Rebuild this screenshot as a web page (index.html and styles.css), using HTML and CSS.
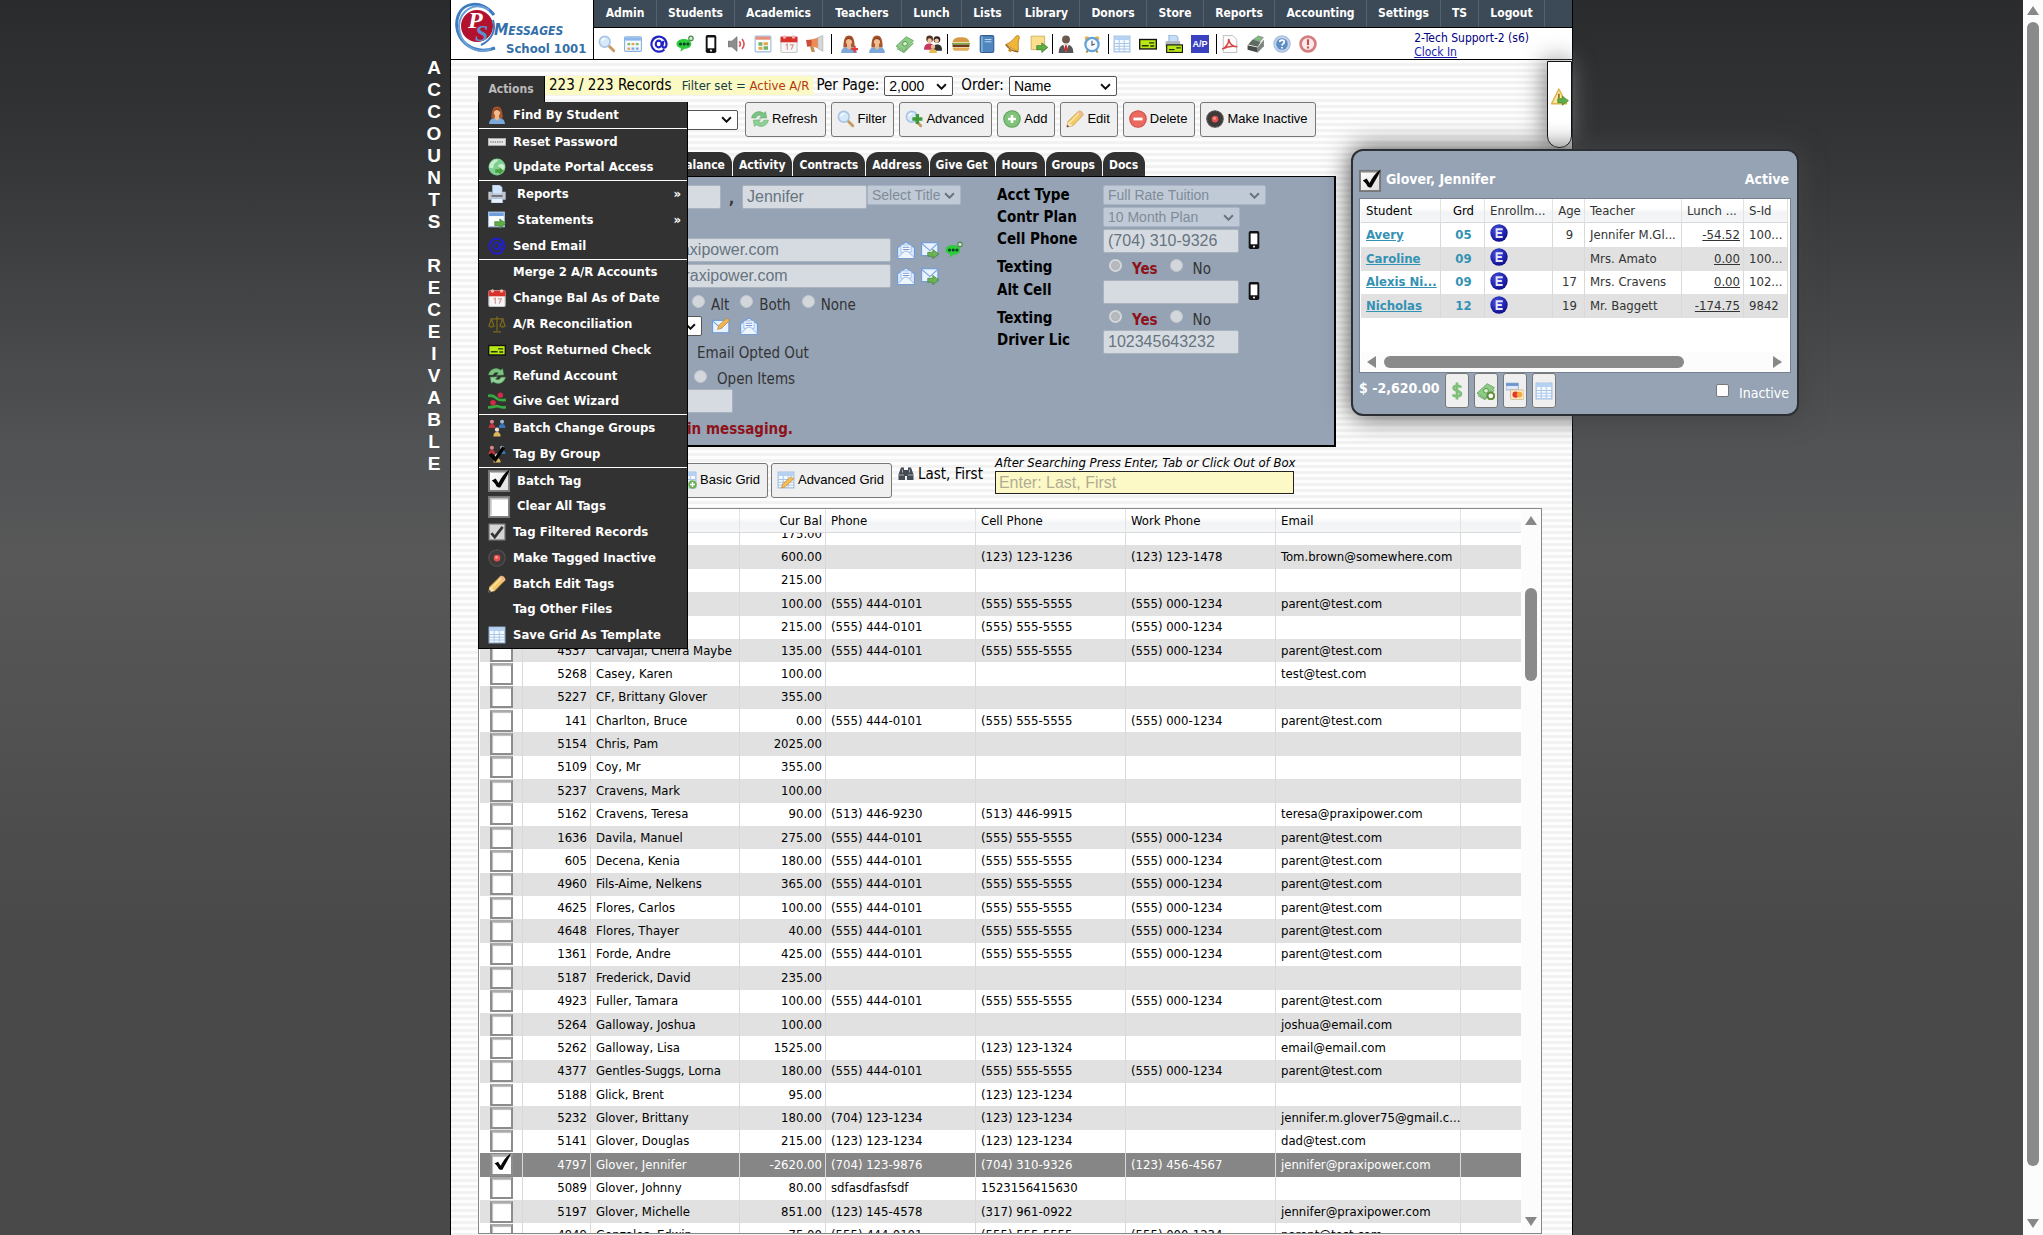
FILE: index.html
```html
<!DOCTYPE html>
<html lang="en">
<head>
<meta charset="utf-8">
<title>Accounts Receivable</title>
<link rel="stylesheet" href="styles.css">
</head>
<body>
<svg class="defs" aria-hidden="true">
  <defs>
    <linearGradient id="g-check" x1="0" y1="0" x2="1" y2="1"><stop offset="0" stop-color="#fff"/><stop offset="1" stop-color="#ddd"/></linearGradient>
    <radialGradient id="g-ball" cx=".4" cy=".35" r=".7"><stop offset="0" stop-color="#4a55e8"/><stop offset="1" stop-color="#0a0a86"/></radialGradient>
  </defs>
  <symbol id="lens" viewBox="0 0 16 16"><path d="M9.500 9.500l4.500 4.500" stroke="#c79a63" stroke-width="2.600" stroke-linecap="round"/><circle cx="6" cy="6" r="4.800" fill="#d5e9fb" stroke="#a9c4e4" stroke-width="1.400"/><path d="M3.500 5.500a3 3 0 0 1 3-2.300" stroke="#fff" fill="none" stroke-width="1.200"/></symbol>
  <symbol id="month" viewBox="0 0 16 16"><rect x=".5" y="1.500" width="15" height="13" rx="1" fill="#f4f9ff" stroke="#8db2dc"/><path d="M1 2h14v3H1z" fill="#8bb8ea"/><path d="M3 7h2.500v2H3zM10.500 7H13v2h-2.500z" fill="#7bbf6a"/><path d="M6.700 7h2.500v2H6.700zM3 11h2.500v2H3z" fill="#e9a04c"/><path d="M6.700 11h2.500v2H6.700zM10.500 11H13v2h-2.500z" fill="#7aa6de"/></symbol>
  <symbol id="at" viewBox="0 0 16 16"><path d="M12.800 12.800A6.700 6.700 0 1 1 14.700 8c0 2-.9 3.200-2.200 3.200-1.200 0-1.600-.9-1.300-2.200l.7-3.800" fill="none" stroke="#2222c4" stroke-width="1.900"/><ellipse cx="7.700" cy="8" rx="2.600" ry="3" fill="none" stroke="#2222c4" stroke-width="1.800"/></symbol>
  <symbol id="chat" viewBox="0 0 16 16"><path d="M7 3.500c4 0 6.600 2 6.600 4.500S11 12.300 7.500 12.300L4 14.800l.4-3C1.800 11 .4 9.800.4 8 .4 5.500 3 3.500 7 3.500z" fill="#2fca3e"/><circle cx="4" cy="8" r="1.400" fill="#042"/><circle cx="7.300" cy="8" r="1.400" fill="#042"/><circle cx="10.600" cy="8" r="1.400" fill="#042"/><circle cx="13.300" cy="3" r="2" fill="#cfe8cf" stroke="#4c8a50"/></symbol>
  <symbol id="phone" viewBox="0 0 16 16"><rect x="3.300" y="0" width="9.400" height="16" rx="1.600" fill="#111"/><path d="M5 2.200h6v9.600H5z" fill="#fff"/><circle cx="8" cy="13.800" r="1" fill="#ddd"/></symbol>
  <symbol id="sound" viewBox="0 0 16 16"><path d="M0 5.500h3.500L8 1.500v13l-4.500-4H0z" fill="#8d8d8d" stroke="#666" stroke-width=".6"/><path d="M10 5.500q2 2.500 0 5M12.500 3.500q3.500 4.500 0 9" fill="none" stroke="#e2565a" stroke-width="1.500"/></symbol>
  <symbol id="agenda" viewBox="0 0 16 16"><rect x="1" y="1" width="14" height="14" rx="1" fill="#fbfdff" stroke="#9cb9dd"/><path d="M1.500 1.500h13v2.700h-13z" fill="#e98e78"/><path d="M4 6.500h3.500v3H4zM8.500 10h4v3h-4z" fill="#6fb36a"/><path d="M8.500 6.500h4v2.500h-4zM4 10.500h3.500V13H4z" fill="#e7a54f"/></symbol>
  <symbol id="date" viewBox="0 0 16 16"><rect x=".8" y="1.500" width="14.400" height="14" rx="1" fill="#f6f6f6" stroke="#c8c8c8"/><path d="M.5 1.500h15v5H.5z" fill="#d8322c"/><circle cx="4" cy="1.800" r="1.500" fill="#f3b3ac"/><circle cx="12" cy="1.800" r="1.500" fill="#f3b3ac"/><path d="M5 9l1.500-.8V13M8.800 8.700h3L10 13" fill="none" stroke="#d49a9a" stroke-width="1.100"/></symbol>
  <symbol id="horn" viewBox="0 0 16 16"><path d="M0 4.500l6-.5v6l-5 .5z" fill="#c95038"/><path d="M5 4l8-2.500v11L5 10z" fill="#ef8a55"/><path d="M10.500 2.300L15 .5v14l-4.500-2.500z" fill="#d6d6d6" stroke="#a5a5a5" stroke-width=".5"/><path d="M3.500 10h3l1.500 5H5z" fill="#c48b54"/></symbol>
  <symbol id="woman" viewBox="0 0 16 16"><path d="M3 11C3 3 5 .5 8 .5S13 3 13 11z" fill="#a9562c"/><path d="M1 16c0-4 2.500-5.300 7-5.300S15 12 15 16z" fill="#7ba7d9"/><path d="M6.300 8h3.400l.3 3.500L8 13l-2-1.500z" fill="#eab98d"/><circle cx="8" cy="6" r="2.700" fill="#eebf94"/><path d="M5 5.500C6 3 9 3 11 5.500 11 2.500 9.500 2 8 2S5 3 5 5.500z" fill="#8b4220"/></symbol>
  <symbol id="womanadd" viewBox="0 0 16 16"><use href="#woman"/><path d="M10 12.500h6M13 9.500v6" stroke="#e23b3b" stroke-width="1.900"/></symbol>
  <symbol id="cash" viewBox="0 0 16 16"><path d="M0 10l9-8.500L15.500 5 7 14.500z" fill="#8dcb86" stroke="#5a9e55" stroke-width=".7"/><path d="M1 12l6 3.500L15.500 7" fill="none" stroke="#69ad62"/><circle cx="8" cy="7.800" r="2.100" fill="#d6f0cf" stroke="#4f9149" stroke-width=".8"/></symbol>
  <symbol id="family" viewBox="0 0 16 16"><circle cx="5" cy="3.500" r="3" fill="#503020"/><circle cx="11.500" cy="4" r="3" fill="#2b211c"/><circle cx="5" cy="4.800" r="2" fill="#f0c39b"/><circle cx="11.300" cy="5.200" r="2" fill="#f0c39b"/><path d="M0 13c0-4 2-5.500 5-5.500s4 2 4 5.500z" fill="#c7375b"/><path d="M8 14c0-4 1-5.500 4-5.500s4 2 4 5.500z" fill="#333"/><circle cx="8" cy="10.500" r="2" fill="#eab98d"/><path d="M4.500 16c0-2.500 1.500-3.500 3.500-3.500s3.500 1 3.500 3.500z" fill="#e3bb4f"/></symbol>
  <symbol id="burger" viewBox="0 0 16 16"><path d="M.5 6.500C1 3 4 2 8 2s7 1 7.500 4.500z" fill="#d79a45"/><path d="M0 7h16v1.500H0z" fill="#7cad3f"/><path d="M.5 8.500h15v2.200H.5z" fill="#6e3c1c"/><path d="M.5 11h15c0 2-1 3-3 3h-9c-2 0-3-1-3-3z" fill="#e0ac5a"/></symbol>
  <symbol id="book" viewBox="0 0 16 16"><rect x="2" y=".5" width="12" height="15" rx="1.300" fill="#4f86bd" stroke="#2f5f92"/><path d="M3.500 1v14" stroke="#9cc3e6"/><path d="M6 4h6M6 6h6" stroke="#b8d6f0"/></symbol>
  <symbol id="bell" viewBox="0 0 16 16"><path d="M1.500 8.500C6 7 8 4 11 .8c1-.7 3 0 2.600 1.600C12 7 13 10 12.500 15z" fill="#f0b63a" stroke="#b97f1b" stroke-width=".8"/><path d="M1.500 8.500q4 5.500 11 6.500" fill="none" stroke="#8f5d12"/><circle cx="5.500" cy="13.500" r="1.600" fill="#c98e22"/></symbol>
  <symbol id="notego" viewBox="0 0 16 16"><path d="M1 1h12v10l-3 2H1z" fill="#fae08e" stroke="#cfae57" stroke-width=".8"/><path d="M6 9.500h4.500V7l5.300 4-5.300 4.500V13H6z" fill="#5fae46" stroke="#3b7f2b" stroke-width=".7"/></symbol>
  <symbol id="man" viewBox="0 0 16 16"><circle cx="8" cy="4" r="3.500" fill="#6b5a50"/><path d="M1.500 16c0-5.500 2.500-7.500 6.500-7.500s6.500 2 6.500 7.500z" fill="#555"/><path d="M5.500 8.500h5L8 15z" fill="#fff"/><path d="M7.200 9h1.600l.7 4L8 15l-1.500-2z" fill="#d7282f"/></symbol>
  <symbol id="clock" viewBox="0 0 16 16"><circle cx="3.500" cy="3" r="2" fill="#e8b04a"/><circle cx="12.500" cy="3" r="2" fill="#e8b04a"/><path d="M3 15.500l2-3M13 15.500l-2-3" stroke="#a77b36" stroke-width="1.500"/><circle cx="8" cy="8.500" r="5.900" fill="#f4fafe" stroke="#62a2d8" stroke-width="2"/><path d="M8 5v4l2.500-1" fill="none" stroke="#555"/></symbol>
  <symbol id="table" viewBox="0 0 16 16"><rect x="1" y="1" width="14" height="14" fill="#f7fbff" stroke="#9bbbe0"/><path d="M1.500 1.500h13v3h-13z" fill="#b6d2f3"/><path d="M1 7.500h14M1 10h14M1 12.500h14M5.500 4v11M10 4v11" stroke="#a9c6e8" stroke-width=".9"/></symbol>
  <symbol id="check" viewBox="0 0 16 16"><rect x=".6" y="4" width="14.800" height="8.400" fill="#b9e814" stroke="#111" stroke-width="1.200"/><path d="M2.500 9.500h6M10 9.800h3.500M9 7h4.500" stroke="#27330a" stroke-width="1.300"/></symbol>
  <symbol id="printcheck" viewBox="0 0 16 16"><path d="M3.500 0h6l2 2v5h-8z" fill="#c6defa" stroke="#7a9cc6" stroke-width=".7"/><path d="M.5 5.500h13V11H.5z" fill="#b0b4bb"/><rect x="1.500" y="8.800" width="14" height="6.700" fill="#b9e814" stroke="#111"/><path d="M3.500 13h5M10 11.500h4" stroke="#27330a" stroke-width="1.200"/></symbol>
  <symbol id="pdf" viewBox="0 0 16 16"><path d="M2 .5h8.500L14 4v11.500H2z" fill="#fdfdfd" stroke="#b9b9b9" stroke-width=".8"/><path d="M1 12.500C6 10 7 6 6.800 3.500 7.500 8 10 10.500 14.500 10.500 10 9.500 5 10.500 1 12.500z" fill="none" stroke="#d84646" stroke-width="1.300"/></symbol>
  <symbol id="register" viewBox="0 0 16 16"><path d="M5 4l5-3.500 5 1.500-4 5z" fill="#8fa18f"/><path d="M1 8.500L5 4l7 2.500-2.500 4z" fill="#5d6b61"/><path d="M.5 9l9 2v4.500l-9-2.500z" fill="#474d49"/><path d="M9.500 11L15 4v6l-5.500 5.500z" fill="#7a857d"/><path d="M8 2.500l4 1" stroke="#6fd06a" stroke-width="1.500"/></symbol>
  <symbol id="help" viewBox="0 0 16 16"><circle cx="8" cy="8" r="7.200" fill="#c3d5eb" stroke="#a3bbdb"/><circle cx="8" cy="8" r="5.200" fill="#5f8ec4"/><path d="M6 6.300C6 4 10 4 10 6.300 10 7.800 8 7.700 8 9.300M8 10.600v1.300" fill="none" stroke="#fff" stroke-width="1.500"/></symbol>
  <symbol id="alert" viewBox="0 0 16 16"><circle cx="8" cy="8" r="6.600" fill="#fbeaea" stroke="#d47e80" stroke-width="2.400"/><path d="M8 3.800v5M8 10.200v1.900" stroke="#c94f52" stroke-width="1.900"/></symbol>
  <symbol id="warngo" viewBox="0 0 16 16"><path d="M7 1L14 14H.5z" fill="#fbe6a0" stroke="#dfb64f" stroke-linejoin="round" stroke-width="1.300"/><path d="M7 5v4" stroke="#8a6414" stroke-width="1.400"/><path d="M6 9.500h4V7.300l5.500 4-5.500 4V13H6z" fill="#5fae46" stroke="#3b7f2b" stroke-width=".6"/></symbol>
  <symbol id="key" viewBox="0 0 16 16"><rect x=".3" y="5" width="15.400" height="6" fill="#e7e7e7" stroke="#bdbdbd" stroke-width=".6"/><path d="M2 8h12" stroke="#8a8a8a" stroke-width="1.400" stroke-dasharray="1.200 .8"/></symbol>
  <symbol id="globe" viewBox="0 0 16 16"><circle cx="8" cy="8" r="7.500" fill="#7fcf93"/><path d="M2 5c2-3.500 5-4 7-3.500C8 4 5 4 5 7S3 9 1 8.500zM9 6l4-1 2 2.500-2 4.500-3-2z" fill="#c9efcc"/><path d="M6.500 10h3.500V8l4 3.300-4 3.500V13H6.500z" fill="#4c9f3c"/></symbol>
  <symbol id="printer" viewBox="0 0 16 16"><path d="M4 0h6l2.500 2v6H4z" fill="#cfe3fa" stroke="#9dbce0" stroke-width=".6"/><path d="M.3 6h3.200v2h9V6h3.200v7H.3z" fill="#c3c6cc"/><path d="M3 9h10v1.500H3z" fill="#666b74"/><path d="M3 12h10v4H3z" fill="#e7f1fc" stroke="#9dbce0" stroke-width=".6"/></symbol>
  <symbol id="formgo" viewBox="0 0 16 16"><rect x=".5" y="1" width="14" height="13" fill="#fdfeff" stroke="#a2bfe4"/><path d="M1 1.500h13v3H1z" fill="#6e9fdc"/><path d="M6 9.500h4.500V7l5.300 4-5.300 4.500V13H6z" fill="#5fae46" stroke="#3b7f2b" stroke-width=".6"/></symbol>
  <symbol id="scales" viewBox="0 0 16 16"><path d="M8 1v13M2 3.500h12M4.500 15h7M3 3.500L.8 10h4.600L3 3.500M13 3.500L10.600 10h4.600L13 3.500" fill="none" stroke="#7c6a1c" stroke-width="1.100"/><path d="M.3 10h5.400q-2.700 3-5.400 0zM10.300 10h5.400q-2.700 3-5.400 0z" fill="#6b5b15"/></symbol>
  <symbol id="refresh" viewBox="0 0 16 16"><path d="M.5 7C1.500 1.500 8 0 11 2.800l2-1.300 1 5.500-6.500.3 1.800-2C8 4.300 5.500 4.500 4.500 7z" fill="#7cc383" stroke="#4c9a55" stroke-width=".4"/><path d="M15.500 9C14.500 14.500 8 16 5 13.200l-2 1.300L2 9l6.500-.3-1.800 2c1.300 1 3.800.8 4.800-1.700z" fill="#8ed095" stroke="#4c9a55" stroke-width=".4"/></symbol>
  <symbol id="give" viewBox="0 0 16 16"><path d="M0 3.500c5-1 6 1 8 2.500s5 1.500 8 1" fill="none" stroke="#38a83f" stroke-width="2.400"/><path d="M16 13.500c-5 1-6-1-8-1s-5 1.500-8 1" fill="none" stroke="#38a83f" stroke-width="2.400"/><circle cx="11" cy="2.800" r="2.400" fill="#cf2d47"/><circle cx="4.500" cy="9.600" r="2.400" fill="#cf2d47"/></symbol>
  <symbol id="groups" viewBox="0 0 16 16"><circle cx="3.500" cy="2.500" r="1.800" fill="#d88"/><path d="M.5 8q0-3.500 3-3.500t3 3.500z" fill="#b8333c"/><circle cx="12.500" cy="2.500" r="1.800" fill="#9bd"/><path d="M9.500 8q0-3.500 3-3.500t3 3.500z" fill="#3676ba"/><circle cx="8" cy="9.500" r="1.900" fill="#edc"/><path d="M4.800 15.500q0-4 3.200-4t3.200 4z" fill="#dcb65c"/></symbol>
  <symbol id="grouptag" viewBox="0 0 16 16"><use href="#groups"/><path d="M2 8l4.500 5L14 2" fill="none" stroke="#050505" stroke-width="3"/></symbol>
  <symbol id="ticked" viewBox="0 0 24 24"><rect x="1" y="2" width="21" height="21" fill="url(#g-check)" stroke="#777" stroke-width="2"/><path d="M2.500 3.500h18" stroke="#aaa"/><path d="M4 12l4-2 3 4.500C14 9 17 4 22.500.5c-1 4.500-5.500 11.500-9.500 18.500-1.500.5-3 0-4-.8C7.500 15.500 6 13.500 4 12z" fill="#060606"/></symbol>
  <symbol id="unticked" viewBox="0 0 24 24"><rect x="1" y="2" width="21" height="21" fill="#fff" stroke="#777" stroke-width="2"/><path d="M3 21V4h18" fill="none" stroke="#bbb" stroke-width="1.500"/></symbol>
  <symbol id="greytick" viewBox="0 0 16 16"><rect x="1" y="1" width="14" height="14" fill="#d5d5d5" stroke="#888"/><path d="M3 9l3 3.500L13 3.500" fill="none" stroke="#333" stroke-width="2.400"/></symbol>
  <symbol id="record" viewBox="0 0 16 16"><circle cx="8" cy="8" r="7.300" fill="#3e3a3a" stroke="#565151"/><circle cx="8" cy="8" r="3" fill="#e4504e"/><circle cx="7.600" cy="7.500" r="1.200" fill="#ff9a90"/></symbol>
  <symbol id="pencil" viewBox="0 0 16 16"><path d="M.8 15.200l.7-4.700L11 1.200q3.500-1 4.300 3.300L6 14z" fill="#f5c965" stroke="#c2933a" stroke-width=".7"/><path d="M11 1.200q3.500-1 4.300 3.300L13.500 6.300 9.300 3z" fill="#f3b98e"/><path d="M3 11.500L11.500 3" stroke="#fbe5a6" stroke-width="1.300"/><path d="M.8 15.200l.7-4.700 4.500 3.500z" fill="#f7e4c0"/><path d="M.8 15.200l.5-2 1.500 1.500z" fill="#333"/></symbol>
  <symbol id="lensadd" viewBox="0 0 16 16"><use href="#lens"/><path d="M6.500 8h9M11 3.500v9" stroke="#3f9a3c" stroke-width="3"/></symbol>
  <symbol id="add" viewBox="0 0 16 16"><circle cx="8" cy="8" r="7.300" fill="#7fc27a" stroke="#5ca058"/><path d="M4.500 8h7M8 4.500v7" stroke="#fff" stroke-width="2.300"/></symbol>
  <symbol id="del" viewBox="0 0 16 16"><circle cx="8" cy="8" r="7.300" fill="#ea6a60" stroke="#cf4b43"/><path d="M4 8h8" stroke="#fff" stroke-width="2.500"/></symbol>
  <symbol id="mail" viewBox="0 0 16 16"><path d="M.5 6L8 .8 15.500 6v9.200H.5z" fill="#dcecff" stroke="#6f9bd8"/><path d="M3.500 3.500h9V10h-9z" fill="#fff" stroke="#8eb0de" stroke-width=".7"/><path d="M5 5.500h6M5 7.500h6" stroke="#6f9bd8"/><path d="M.5 15l6-6h3l6 6" fill="#eef6ff" stroke="#8eb0de" stroke-width=".8"/></symbol>
  <symbol id="mailgo" viewBox="0 0 16 16"><rect x=".5" y="1.500" width="14.500" height="11.500" fill="#e8f3ff" stroke="#6f9bd8"/><path d="M.5 2L8 8.500 15 2" fill="none" stroke="#7ba3db"/><path d="M6 10h4.500V7.500l5.300 4-5.300 4.300v-2.300H6z" fill="#6db254" stroke="#3b7f2b" stroke-width=".6"/></symbol>
  <symbol id="mailedit" viewBox="0 0 16 16"><rect x=".5" y="3" width="14.500" height="11" fill="#e8f3ff" stroke="#6f9bd8"/><path d="M.5 3.500L8 10l7-6.500" fill="none" stroke="#7ba3db"/><path d="M5 11l1-3.500L13 1l2.500 2L8.500 10z" fill="#f0b552" stroke="#bd8431" stroke-width=".6"/></symbol>
  <symbol id="tableadd" viewBox="0 0 16 16"><use href="#table"/><circle cx="12" cy="12" r="3.800" fill="#6dae52"/><path d="M9.800 12h4.400M12 9.800v4.400" stroke="#fff" stroke-width="1.300"/></symbol>
  <symbol id="tableedit" viewBox="0 0 16 16"><use href="#table"/><path d="M4 15l1-3.500L12.500 5l2.300 2L7.500 14z" fill="#f5bd55" stroke="#bd8431" stroke-width=".6"/></symbol>
  <symbol id="binoc" viewBox="0 0 16 16"><path d="M3 1.500h3V4h4V1.500h3l2.500 7v5.500H9v-4H7v4H.5V8.500z" fill="#454b52"/><path d="M1 9h5M10 9h5M4.500 3.500v3M11.500 3.500v3" stroke="#a5afb8"/></symbol>
  <symbol id="enrolled" viewBox="0 0 16 16"><circle cx="8" cy="8" r="7.700" fill="url(#g-ball)"/><path d="M11.300 4.600H5.900v6.900h5.400M5.900 8h4.700" fill="none" stroke="#e6e6f6" stroke-width="1.700"/></symbol>
  <symbol id="dollar" viewBox="0 0 16 16"><path d="M11.500 5C11 3 5 2.500 5 5.300S11.500 7.500 11.500 10.500 5 13.300 4.500 11M8 .5v15" fill="none" stroke="#7fbf7a" stroke-width="2.400"/></symbol>
  <symbol id="cashadd" viewBox="0 0 16 16"><use href="#cash"/><circle cx="12.300" cy="12.300" r="3" fill="#fff" stroke="#5f8f3a" stroke-width="1.800"/></symbol>
  <symbol id="cards" viewBox="0 0 16 16"><path d="M0 1h11v6H0z" fill="#dfe9f7" stroke="#8eaad0" stroke-width=".7"/><path d="M0 1h11v2.500H0z" fill="#6f95cf"/><rect x="4" y="7" width="12" height="8.500" rx="1" fill="#f8e7c8" stroke="#d6b57c" stroke-width=".7"/><circle cx="8.500" cy="11.200" r="2.800" fill="#e5342c"/><circle cx="12" cy="11.200" r="2.500" fill="#f4a93a"/></symbol>
</svg>

<div class="page">
  <h1 class="side-title" aria-label="Accounts Receivable"><span>A</span><span>C</span><span>C</span><span>O</span><span>U</span><span>N</span><span>T</span><span>S</span><span></span><span>R</span><span>E</span><span>C</span><span>E</span><span>I</span><span>V</span><span>A</span><span>B</span><span>L</span><span>E</span></h1>

  <div class="frame">
    <header class="top">
      <div class="brand">
        <svg class="logo" viewBox="0 0 50 54" aria-hidden="true">
          <path d="M41 13C30-2 8-2 4 18 1 38 20 54 42 46" fill="none" stroke="#3d7bc0" stroke-width="3"/>
          <path d="M36 8C22-1 7 8 6 24c0 18 16 29 32 23" fill="none" stroke="#6ba0d6" stroke-width="2"/>
          <circle cx="24" cy="24" r="16" fill="#b3122e"/>
          <path d="M40 18c3 10-1 20-12 25" fill="none" stroke="#3d7bc0" stroke-width="2"/>
          <text x="15" y="26" class="logo-p">P</text><text x="22" y="39" class="logo-s">S</text>
        </svg>
        <div class="brand-text"><b class="brand-name">M<small>ESSAGES</small></b><b class="brand-school">School 1001</b></div>
      </div>
      <div class="bars">
        <nav class="nav">
          <a href="#">Admin</a><a href="#">Students</a><a href="#">Academics</a><a href="#">Teachers</a><a href="#">Lunch</a><a href="#">Lists</a><a href="#">Library</a><a href="#">Donors</a><a href="#">Store</a><a href="#">Reports</a><a href="#">Accounting</a><a href="#">Settings</a><a href="#">TS</a><a href="#">Logout</a>
        </nav>
        <div class="tools">
          <div class="tool-set start"><svg><use href="#lens"/></svg><svg><use href="#month"/></svg><svg><use href="#at"/></svg><svg><use href="#chat"/></svg><svg><use href="#phone"/></svg><svg><use href="#sound"/></svg><svg><use href="#agenda"/></svg><svg><use href="#date"/></svg><svg><use href="#horn"/></svg></div>
          <div class="tool-set people"><svg><use href="#womanadd"/></svg><svg><use href="#woman"/></svg><svg><use href="#cash"/></svg><svg><use href="#family"/></svg></div>
          <div class="tool-set"><svg><use href="#burger"/></svg><svg><use href="#book"/></svg><svg><use href="#bell"/></svg><svg><use href="#notego"/></svg></div>
          <div class="tool-set wide"><svg><use href="#man"/></svg><svg><use href="#clock"/></svg></div>
          <div class="tool-set wide"><svg><use href="#table"/></svg><svg><use href="#check"/></svg><svg><use href="#printcheck"/></svg><span class="ap">A/P</span></div>
          <div class="tool-set"><svg><use href="#pdf"/></svg><svg><use href="#register"/></svg><svg><use href="#help"/></svg><svg><use href="#alert"/></svg></div>
          <div class="user">2-Tech Support-2 (s6)<br><a href="#">Clock In</a></div>
        </div>
      </div>
    </header>

    <aside class="pull-tab"><svg class="ic"><use href="#warngo"/></svg></aside>

    <main class="content">
      <div class="status">
        <div class="actions">
          <button class="actions-btn" type="button">Actions</button>
          <ul class="menu">
            <li><svg class="ic"><use href="#woman"/></svg>Find By Student</li>
            <li class="cut"><svg class="ic"><use href="#key"/></svg>Reset Password</li>
            <li><svg class="ic"><use href="#globe"/></svg>Update Portal Access</li>
            <li class="cut sub"><svg class="ic"><use href="#printer"/></svg>Reports<span>»</span></li>
            <li class="sub"><svg class="ic"><use href="#formgo"/></svg>Statements<span>»</span></li>
            <li><svg class="ic"><use href="#at"/></svg>Send Email</li>
            <li class="cut"><i class="ic"></i>Merge 2 A/R Accounts</li>
            <li><svg class="ic"><use href="#date"/></svg>Change Bal As of Date</li>
            <li><svg class="ic"><use href="#scales"/></svg>A/R Reconciliation</li>
            <li><svg class="ic"><use href="#check"/></svg>Post Returned Check</li>
            <li><svg class="ic"><use href="#refresh"/></svg>Refund Account</li>
            <li><svg class="ic"><use href="#give"/></svg>Give Get Wizard</li>
            <li class="cut"><svg class="ic"><use href="#groups"/></svg>Batch Change Groups</li>
            <li><svg class="ic"><use href="#grouptag"/></svg>Tag By Group</li>
            <li class="cut"><svg class="box"><use href="#ticked"/></svg>Batch Tag</li>
            <li><svg class="box"><use href="#unticked"/></svg>Clear All Tags</li>
            <li><svg class="ic"><use href="#greytick"/></svg>Tag Filtered Records</li>
            <li><svg class="ic"><use href="#record"/></svg>Make Tagged Inactive</li>
            <li><svg class="ic"><use href="#pencil"/></svg>Batch Edit Tags</li>
            <li><i class="ic"></i>Tag Other Files</li>
            <li><svg class="ic"><use href="#table"/></svg>Save Grid As Template</li>
          </ul>
        </div>
        <div class="count">223 / 223 Records <span class="filter">Filter set = <em>Active A/R</em></span></div>
        <label class="pick">Per Page: <select class="sel per-page"><option>2,000</option></select></label>
        <label class="pick">Order: <select class="sel order"><option>Name</option></select></label>
      </div>

      <div class="commands">
        <select class="sel saved" aria-label="Saved filter"><option></option></select>
        <button class="btn" type="button"><svg class="ic"><use href="#refresh"/></svg>Refresh</button>
        <button class="btn" type="button"><svg class="ic"><use href="#lens"/></svg>Filter</button>
        <button class="btn" type="button"><svg class="ic"><use href="#lensadd"/></svg>Advanced</button>
        <button class="btn" type="button"><svg class="ic"><use href="#add"/></svg>Add</button>
        <button class="btn" type="button"><svg class="ic"><use href="#pencil"/></svg>Edit</button>
        <button class="btn" type="button"><svg class="ic"><use href="#del"/></svg>Delete</button>
        <button class="btn" type="button"><svg class="ic"><use href="#record"/></svg>Make Inactive</button>
      </div>

      <div class="tabs">
        <a href="#">Balance</a><a href="#">Activity</a><a href="#">Contracts</a><a href="#">Address</a><a href="#">Give Get</a><a href="#">Hours</a><a href="#">Groups</a><a href="#">Docs</a>
      </div>

      <section class="panel">
        <div class="contact">
          <div class="line name-line"><input class="fld last" aria-label="Last name" disabled><b>,</b><input class="fld first" aria-label="First name" value="Jennifer" disabled><select class="sel off title" aria-label="Title" disabled><option>Select Title</option></select></div>
          <div class="line mail-line"><input class="fld mail" aria-label="Email" value="jennifer@praxipower.com" disabled><svg class="ic"><use href="#mail"/></svg><svg class="ic"><use href="#mailgo"/></svg><svg class="ic"><use href="#chat"/></svg></div>
          <div class="line mail-line"><input class="fld mail" aria-label="Alternate email" value="jennifer1@praxipower.com" disabled><svg class="ic"><use href="#mail"/></svg><svg class="ic"><use href="#mailgo"/></svg></div>
          <div class="line radios"><label><input type="radio" name="use" disabled>Alt</label><label><input type="radio" name="use" disabled>Both</label><label><input type="radio" name="use" disabled>None</label></div>
          <div class="line letter"><select class="sel" aria-label="Letter"><option></option></select><svg class="ic"><use href="#mailedit"/></svg><svg class="ic"><use href="#mail"/></svg></div>
          <div class="line opted">Email Opted Out</div>
          <div class="line radios items"><label><input type="radio" name="stmt" disabled>Open Items</label></div>
          <div class="line"><input class="fld code" aria-label="Code" disabled></div>
          <p class="notice">in messaging.</p>
        </div>
        <div class="details">
          <label for="acct">Acct Type</label><div><select id="acct" class="sel off acct" disabled><option>Full Rate Tuition</option></select></div>
          <label for="plan">Contr Plan</label><div><select id="plan" class="sel off plan" disabled><option>10 Month Plan</option></select></div>
          <label for="cell">Cell Phone</label><div><input id="cell" class="fld num" value="(704) 310-9326" disabled><svg class="ic"><use href="#phone"/></svg></div>
          <b>Texting</b><div class="yesno"><label><input type="radio" name="t1" checked disabled><b>Yes</b></label><label><input type="radio" name="t1" disabled>No</label></div>
          <label for="alt">Alt Cell</label><div><input id="alt" class="fld num" disabled><svg class="ic"><use href="#phone"/></svg></div>
          <b>Texting</b><div class="yesno"><label><input type="radio" name="t2" checked disabled><b>Yes</b></label><label><input type="radio" name="t2" disabled>No</label></div>
          <label for="lic">Driver Lic</label><div><input id="lic" class="fld num" value="102345643232" disabled></div>
        </div>
      </section>

      <div class="finder">
        <button class="btn" type="button"><svg class="ic"><use href="#tableadd"/></svg>Basic Grid</button>
        <button class="btn" type="button"><svg class="ic"><use href="#tableedit"/></svg>Advanced Grid</button>
        <span class="by"><svg><use href="#binoc"/></svg>Last, First</span>
        <label class="search"><i>After Searching Press Enter, Tab or Click Out of Box</i><input placeholder="Enter: Last, First"></label>
      </div>

      <section class="grid">
        <div class="rows" id="rows">
          <table>
            <colgroup><col class="c-tag"><col class="c-id"><col class="c-name"><col class="c-bal"><col class="c-tel"><col class="c-tel"><col class="c-tel"><col class="c-mail"><col></colgroup>
            <thead><tr><th></th><th></th><th></th><th class="r">Cur Bal</th><th>Phone</th><th>Cell Phone</th><th>Work Phone</th><th>Email</th><th></th></tr></thead>
            <tbody id="accounts"></tbody>
          </table>
        </div>
        <div class="vbar"><i class="up"></i><i class="thumb"></i><i class="down"></i></div>
      </section>
    </main>

    <section class="card">
      <div class="card-head"><svg class="box"><use href="#ticked"/></svg><b>Glover, Jennifer</b><b class="state">Active</b></div>
      <div class="kids">
        <table>
          <colgroup><col class="k1"><col class="k2"><col class="k3"><col class="k4"><col class="k5"><col class="k6"><col></colgroup>
          <thead><tr><th class="dark">Student</th><th class="c dark">Grd</th><th>Enrollm...</th><th class="c">Age</th><th>Teacher</th><th>Lunch ...</th><th>S-Id</th></tr></thead>
          <tbody>
            <tr><td><a href="#">Avery</a></td><td class="grd">05</td><td><svg><use href="#enrolled"/></svg></td><td class="c">9</td><td>Jennifer M.Gl...</td><td class="r"><u>-54.52</u></td><td>100...</td></tr>
            <tr><td><a href="#">Caroline</a></td><td class="grd">09</td><td><svg><use href="#enrolled"/></svg></td><td></td><td>Mrs. Amato</td><td class="r"><u>0.00</u></td><td>100...</td></tr>
            <tr><td><a href="#">Alexis Ni...</a></td><td class="grd">09</td><td><svg><use href="#enrolled"/></svg></td><td class="c">17</td><td>Mrs. Cravens</td><td class="r"><u>0.00</u></td><td>102...</td></tr>
            <tr><td><a href="#">Nicholas</a></td><td class="grd">12</td><td><svg><use href="#enrolled"/></svg></td><td class="c">19</td><td>Mr. Baggett</td><td class="r"><u>-174.75</u></td><td>9842</td></tr>
          </tbody>
        </table>
        <div class="hbar"><i class="left"></i><i class="thumb"></i><i class="right"></i></div>
      </div>
      <div class="card-foot">
        <b>$ -2,620.00</b>
        <button type="button" aria-label="Payment"><svg><use href="#dollar"/></svg></button><button type="button" aria-label="Add cash"><svg><use href="#cashadd"/></svg></button><button type="button" aria-label="Cards"><svg><use href="#cards"/></svg></button><button type="button" aria-label="Ledger"><svg><use href="#table"/></svg></button>
        <label><input type="checkbox">Inactive</label>
      </div>
    </section>
  </div>
</div>
<div class="vbar page-bar"><i class="up"></i><i class="thumb"></i><i class="down"></i></div>
<script src="grid.js"></script>
</body>
</html>
```
FILE: grid.js
```js
const F = '(555) 444-0101', C = '(555) 555-5555', W = '(555) 000-1234', P = 'parent@test.com';
const accounts = [
  ['', '', '175.00', '', '', '', ''],
  ['', '', '600.00', '', '(123) 123-1236', '(123) 123-1478', 'Tom.brown@somewhere.com'],
  ['', '', '215.00', '', '', '', ''],
  ['', '', '100.00', F, C, W, P],
  ['', '', '215.00', F, C, W, ''],
  ['4537', 'Carvajal, Cheira Maybe', '135.00', F, C, W, P],
  ['5268', 'Casey, Karen', '100.00', '', '', '', 'test@test.com'],
  ['5227', 'CF, Brittany Glover', '355.00', '', '', '', ''],
  ['141', 'Charlton, Bruce', '0.00', F, C, W, P],
  ['5154', 'Chris, Pam', '2025.00', '', '', '', ''],
  ['5109', 'Coy, Mr', '355.00', '', '', '', ''],
  ['5237', 'Cravens, Mark', '100.00', '', '', '', ''],
  ['5162', 'Cravens, Teresa', '90.00', '(513) 446-9230', '(513) 446-9915', '', 'teresa@praxipower.com'],
  ['1636', 'Davila, Manuel', '275.00', F, C, W, P],
  ['605', 'Decena, Kenia', '180.00', F, C, W, P],
  ['4960', 'Fils-Aime, Nelkens', '365.00', F, C, W, P],
  ['4625', 'Flores, Carlos', '100.00', F, C, W, P],
  ['4648', 'Flores, Thayer', '40.00', F, C, W, P],
  ['1361', 'Forde, Andre', '425.00', F, C, W, P],
  ['5187', 'Frederick, David', '235.00', '', '', '', ''],
  ['4923', 'Fuller, Tamara', '100.00', F, C, W, P],
  ['5264', 'Galloway, Joshua', '100.00', '', '', '', 'joshua@email.com'],
  ['5262', 'Galloway, Lisa', '1525.00', '', '(123) 123-1324', '', 'email@email.com'],
  ['4377', 'Gentles-Suggs, Lorna', '180.00', F, C, W, P],
  ['5188', 'Glick, Brent', '95.00', '', '(123) 123-1234', '', ''],
  ['5232', 'Glover, Brittany', '180.00', '(704) 123-1234', '(123) 123-1234', '', 'jennifer.m.glover75@gmail.c...'],
  ['5141', 'Glover, Douglas', '215.00', '(123) 123-1234', '(123) 123-1234', '', 'dad@test.com'],
  ['4797', 'Glover, Jennifer', '-2620.00', '(704) 123-9876', '(704) 310-9326', '(123) 456-4567', 'jennifer@praxipower.com'],
  ['5089', 'Glover, Johnny', '80.00', 'sdfasdfasfsdf', '1523156415630', '', ''],
  ['5197', 'Glover, Michelle', '851.00', '(123) 145-4578', '(317) 961-0922', '', 'jennifer@praxipower.com'],
  ['4949', 'Gonzales, Edwin', '75.00', F, C, W, P]
];
const body = document.getElementById('accounts');
for (const [id, name, bal, ...rest] of accounts) {
  const on = id === '4797';
  const tr = body.insertRow();
  if (on) tr.className = 'on';
  tr.innerHTML = `<td><input type="checkbox" aria-label="Tag ${name}"${on ? ' checked' : ''}>` +
    (on ? '<svg class="tick" viewBox="0 0 24 24"><path d="M4 12l4-2 3 4.500C14 9 17 4 22.500.5c-1 4.500-5.500 11.500-9.500 18.500-1.500.5-3 0-4-.8C7.500 15.500 6 13.500 4 12z" fill="#060606"/></svg>' : '') +
    `</td><td class="r">${id}</td><td>${name}</td><td class="r">${bal}</td>` +
    rest.map(t => `<td>${t}</td>`).join('') + '<td></td>';
}
document.getElementById('rows').scrollTop = 11;
```
FILE: styles.css
```css
* { box-sizing: border-box; }
body {
  margin: 0;
  height: 100vh;
  display: flex;
  overflow: hidden;
  font: 13px "DejaVu Sans Condensed", "Noto Sans", sans-serif;
  color: #000;
  background: linear-gradient(#2a2b2c 0, #333537 150px, #505254 440px, #585858 560px, #494949 930px, #494949 100%);
}
.defs { position: absolute; width: 0; height: 0; }
svg { display: block; flex: none; }
.ic { width: 18px; height: 18px; flex: none; }
.box { width: 23px; height: 23px; }
button, input, select { font-family: "Liberation Sans", Arial, sans-serif; color: #000; }
.r { text-align: right; }
.c { text-align: center; }

.page { flex: 1; min-width: 0; display: flex; justify-content: center; }
.frame {
  position: relative;
  width: 1123px;
  display: flex;
  flex-direction: column;
  border: solid #000;
  border-width: 0 1px;
  background: repeating-linear-gradient(#fdfdfd 0 3px, #f2f2f2 3px 6px);
}
.side-title {
  position: absolute;
  margin: 57px 0 0 -1155px;
  width: 24px;
  font: bold 19px/22px "Liberation Sans", Arial, sans-serif;
  color: #fff;
  text-align: center;
}
.side-title span { display: block; height: 22px; }

/* header */
.top { display: flex; height: 60px; border-bottom: 1px solid #000; background: #fff; }
.brand { width: 143px; display: flex; border-right: 1px solid #000; }
.logo { width: 50px; height: 54px; margin: 2px 0 0 2px; }
.logo-p { font: italic bold 24px "Liberation Serif", serif; fill: #fff; }
.logo-s { font: italic bold 24px "Liberation Serif", serif; fill: #5d8fce; }
.brand-text { display: flex; flex-direction: column; margin: 21px 0 0 -9px; color: #336fa9; line-height: 18px; }
.brand-name { font-size: 16px; font-style: italic; }
.brand-name small { font-size: 12px; }
.brand-school { padding-left: 12px; font-size: 13px; }
.bars { flex: 1; display: flex; flex-direction: column; }
.nav {
  display: grid;
  grid-template-columns: 63fr 78fr 88fr 79fr 60fr 52fr 66fr 67fr 57fr 71fr 92fr 74fr 38fr 66fr 27fr;
  height: 28px;
  border-bottom: 1px solid #000;
  background: #3c4956;
}
.nav a { color: #fff; font: bold 12px/27px "DejaVu Sans Condensed", sans-serif; text-align: center; text-decoration: none; border-right: 1px solid #55616d; }
.tools { flex: 1; display: flex; align-items: center; padding: 0 0 3px 4px; }
.tool-set { display: flex; gap: 8px; height: 20px; align-items: center; margin-right: 4px; padding-left: 4px; border-left: 1px solid #000; }
.tool-set svg { width: 18px; height: 18px; }
.tool-set.start { padding: 0; border: 0; margin-right: 7px; }
.tool-set.people { padding-left: 7px; }
.tool-set.people svg { width: 20px; }
.tool-set.wide + .tool-set.wide, .tool-set.wide + .tool-set { margin-left: 3px; }
.ap { width: 18px; height: 18px; background: #3a40c0; color: #fff; font: bold 9px/18px "Liberation Sans", sans-serif; text-align: center; }
.user { margin: 3px 43px 0 auto; font-size: 12px; line-height: 14px; color: #000080; }
.user a { color: #1a1ab0; }

.pull-tab {
  position: absolute;
  top: 61px;
  right: 0;
  width: 25px;
  height: 87px;
  padding-top: 26px;
  display: flex;
  justify-content: center;
  border: 1px solid #111;
  border-radius: 0 0 12px 12px;
  background: #fff;
  box-shadow: -2px 0 24px #777;
}

/* content */
.content { flex: 1; min-height: 0; display: flex; flex-direction: column; padding: 16px 30px 1px 27px; }
.status { display: flex; align-items: flex-start; height: 26px; font-size: 15px; line-height: 19px; }
.actions { position: relative; z-index: 5; }
.actions-btn { display: block; width: 67px; height: 26px; border: 0; border-right: 1px solid #000; padding: 0; background: #323232; color: #bbb; font: bold 12px "DejaVu Sans Condensed", sans-serif; }
.menu {
  position: absolute;
  top: 26px;
  left: 0;
  width: 210px;
  height: 547px;
  margin: 0;
  padding: 0;
  list-style: none;
  display: flex;
  flex-direction: column;
  border: 1px solid #000;
  border-top: 0;
  background: #323232;
  color: #fff;
  font-weight: bold;
  font-size: 13px;
  line-height: 24px;
}
.menu li { flex: 1; display: flex; align-items: center; gap: 7px; padding-left: 9px; }
.menu li.cut { border-top: 1px solid #fff; }
.menu .sub { gap: 11px; }
.menu .sub span { margin: 0 6px 0 auto; }
.menu .box { margin-right: -1px; }
.count { padding: 0 4px; background: #fbf9c4; }
.filter { margin-left: 6px; font-size: 13px; color: #123c46; }
.filter em { font-style: normal; color: #b5360c; }
.pick { display: flex; gap: 5px; margin: 0 5px 0 3px; }
.sel {
  appearance: none;
  height: 20px;
  padding: 0 4px;
  border: 1px solid #555;
  border-radius: 2px;
  background: #fff url("data:image/svg+xml,%3Csvg xmlns='http://www.w3.org/2000/svg' viewBox='0 0 10 6'%3E%3Cpath d='M1 1l4 4 4-4' fill='none' stroke='%23111' stroke-width='1.800'/%3E%3C/svg%3E") no-repeat right 5px center / 11px 7px;
  font-size: 14px;
  line-height: 18px;
}
.per-page { width: 69px; }
.order { width: 108px; }
.commands { display: flex; align-items: center; gap: 5px; height: 35px; }
.saved { width: 180px; margin: 0 2px 0 80px; }
.btn {
  display: flex;
  align-items: center;
  gap: 3px;
  height: 35px;
  padding: 0 7px 2px 5px;
  border: 1px solid #777;
  border-radius: 3px;
  background: #efefef;
  font-size: 13px;
  white-space: nowrap;
}

.tabs { display: flex; gap: 1px; height: 24px; margin-top: 15px; padding-left: 193px; }
.tabs a { padding: 3px 7px 0 6px; border-radius: 12px 12px 0 0; background: #323232; color: #fff; font-weight: bold; font-size: 12px; line-height: 21px; text-decoration: none; white-space: nowrap; }

.panel {
  display: flex;
  width: 858px;
  height: 271px;
  padding: 8px 4px 0 0;
  border: solid #000;
  border-width: 1px 2px 2px 1px;
  background: #95a3b5;
  font-size: 15px;
  color: #333;
}
.contact { width: 518px; display: flex; flex-direction: column; }
.line { display: flex; align-items: center; gap: 6px; }
.fld { height: 24px; padding: 0 4px; border: 1px solid #aab3bd; border-radius: 2px; background: #d6dbe1; color: #66747f; font-size: 16px; }
.sel.off { border-color: #a9b5c4; background-color: #c0cad6; color: #7f8b98; opacity: 1; background-image: url("data:image/svg+xml,%3Csvg xmlns='http://www.w3.org/2000/svg' viewBox='0 0 10 6'%3E%3Cpath d='M1 1l4 4 4-4' fill='none' stroke='%23667480' stroke-width='1.800'/%3E%3C/svg%3E"); }
.name-line { gap: 0; height: 52px; align-items: flex-start; }
.name-line b { width: 21px; text-align: center; line-height: 28px; }
.last { width: 122px; margin-left: 120px; }
.first { width: 125px; }
.title { width: 94px; }
.mail-line { height: 26px; padding-left: 114px; }
.mail { width: 298px; }
.radios { height: 27px; padding: 4px 0 0 213px; gap: 11px; }
.radios label { display: flex; align-items: center; gap: 6px; }
input[type=radio] { appearance: none; width: 13px; height: 13px; margin: 0 0 6px; border: 1px solid #c3c8ce; border-radius: 50%; background: #d3d6da; }
input[type=radio]:checked { background: #b7babd; border: 2px solid #d3d6da; box-shadow: inset 0 0 0 1px #b0b4b8; }
.letter { gap: 10px; height: 20px; }
.letter .sel { width: 102px; margin-left: 121px; }
.opted { height: 29px; padding: 4px 0 0 218px; }
.items { height: 24px; padding-left: 215px; }
.items label { gap: 10px; }
.code { width: 132px; margin-left: 122px; }
.notice { margin: 5px 0 0; width: 314px; text-align: right; font-weight: bold; font-size: 15px; line-height: 22px; color: #8e1219; }

.details { display: grid; grid-template-columns: 106px 1fr; grid-template-rows: 22px 22px 25px 26px 25px 25px 25px; color: #333; }
.details > label, .details > b { font-weight: bold; color: #000; line-height: 20px; }
.details > b { padding-top: 3px; }
.details > div { display: flex; gap: 6px; align-items: flex-start; }
.details .ic { margin-top: 2px; }
.acct { width: 163px; }
.plan { width: 137px; }
.num { width: 136px; }
.yesno { padding: 5px 0 0 6px; }
.yesno label { display: flex; align-items: center; gap: 10px; margin-right: 6px; }
.yesno b { color: #8e1219; }

.finder { display: flex; height: 35px; margin: 16px 0 10px; padding-left: 195px; gap: 3px; }
.by { display: flex; align-items: center; gap: 4px; height: 22px; margin: 0 9px 0 3px; font-size: 15px; }
.by svg { width: 16px; height: 16px; }
.search { display: flex; flex-direction: column; width: 299px; margin-top: -8px; line-height: 16px; font-size: 13px; white-space: nowrap; }
.search input { height: 23px; padding: 0 3px; border: 1px solid #222; background: #fdf9c6; font-size: 16px; }
.search input::placeholder { color: #b0ac93; }

/* account grid */
.grid { flex: 1; min-height: 0; display: flex; border: 1px solid #888; background: #fff; }
.rows { flex: 1; overflow: hidden; padding-left: 1px; }
table { width: 100%; border-collapse: separate; border-spacing: 0; table-layout: fixed; }
.rows table { height: 749px; }
.c-tag { width: 43px; } .c-id { width: 68px; } .c-name { width: 149px; } .c-bal { width: 86px; } .c-tel { width: 150px; } .c-mail { width: 185px; }
th { height: 24px; padding: 0 3px 0 5px; font-weight: normal; text-align: left; border-right: 1px solid #e3e3e3; border-bottom: 1px solid #d8d8d8; background: linear-gradient(#fff 40%, #f1f3f5 60%, #f5f6f7); }
th.r { text-align: right; }
th.c { text-align: center; }
.rows th { position: sticky; top: 0; z-index: 2; }
td { height: 23px; padding: 0 3px 0 5px; line-height: 20px; border-right: 1px solid #d9d9d9; white-space: nowrap; overflow: hidden; }
.rows td:first-child { padding: 0 0 0 10px; position: relative; }
.rows td:last-child, .rows th:last-child { border-right: 0; }
tbody tr:nth-child(even) { background: #e1e1e1; }
tbody tr.on { background: #868686; color: #fff; }
.rows input { appearance: none; display: block; width: 23px; height: 22px; margin: 0; border: 2px solid #8c8c8c; border-top-color: #aaa; background: #fff; box-shadow: inset 1px 1px 1px #bbb; }
.tick { position: absolute; left: 10px; top: 0; width: 23px; height: 21px; }

.vbar { width: 20px; display: flex; flex-direction: column; align-items: center; background: #fcfcfc; }
.vbar .thumb { width: 12px; height: 93px; margin: 63px 0 auto; border-radius: 6px; background: #8a8a8a; }
.up, .down, .left, .right { border: 6px solid transparent; }
.up { margin-top: 1px; border-bottom: 9px solid #888; }
.down { margin-bottom: 1px; border-top: 9px solid #888; }
.page-bar { flex: none; }
.page-bar .up { margin-top: 0; }
.page-bar .thumb { flex: 1; margin: 7px 0 53px; }

/* student card */
.card {
  position: absolute;
  top: 149px;
  left: 900px;
  z-index: 4;
  width: 448px;
  height: 267px;
  padding: 17px 6px 0;
  border: 2px solid #2c2f34;
  border-radius: 12px;
  background: #95a3b5;
  box-shadow: 0 0 26px #444;
  color: #fff;
  font-size: 14px;
}
.card-head { display: flex; gap: 4px; height: 30px; padding: 1px 2px 0 0; }
.card-head b { line-height: 20px; }
.state { margin-left: auto; }
.kids { height: 175px; padding: 0 2px 0 1px; border: 1px solid #77828f; background: #fff; color: #333; font-size: 13px; display: flex; flex-direction: column; }
.kids table { height: 119px; }
.dark { color: #000; }
.k1 { width: 80px; } .k2 { width: 44px; } .k3 { width: 68px; } .k4 { width: 32px; } .k5 { width: 97px; } .k6 { width: 62px; }
.kids td svg { width: 18px; height: 18px; margin-bottom: 3px; }
.kids td a, .grd { color: #3392b4; font-weight: bold; }
.grd { text-align: center; }
.kids th { overflow: hidden; white-space: nowrap; }
.hbar { display: flex; align-items: center; height: 20px; margin-top: auto; background: #fcfcfc; }
.hbar .thumb { width: 300px; height: 12px; margin: 0 auto 0 8px; border-radius: 6px; background: #8a8a8a; }
.left { border-right: 9px solid #888; }
.right { border-left: 9px solid #888; }
.card-foot { display: flex; gap: 5px; height: 36px; }
.card-foot > b { width: 81px; line-height: 30px; white-space: nowrap; }
.card-foot button { width: 24px; height: 35px; padding: 0; display: flex; align-items: center; justify-content: center; border: 1px solid #777; border-radius: 3px; background: #efefef; }
.card-foot svg { width: 18px; height: 18px; }
.card-foot label { display: flex; align-items: center; gap: 10px; margin: 4px 2px 0 auto; }
.card-foot input { appearance: none; width: 13px; height: 13px; margin: 0 0 6px; border: 1px solid #777; border-radius: 2px; background: #fff; }
```
